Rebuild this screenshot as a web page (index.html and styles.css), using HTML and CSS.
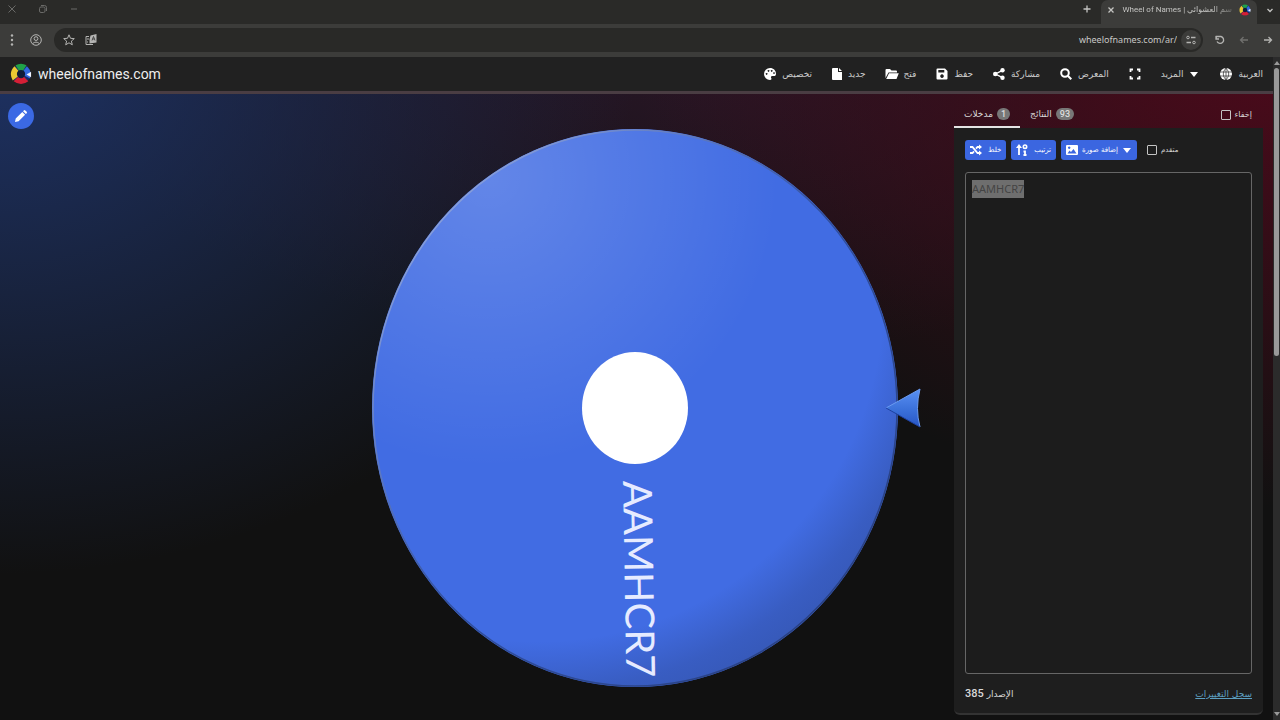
FILE: index.html
```html
<!DOCTYPE html>
<html lang="ar">
<head>
<meta charset="utf-8">
<title>Wheel of Names</title>
<link rel="stylesheet" href="styles.css">
</head>
<body>
<div class="browser">
  <div class="tabstrip">
    <div class="window-controls">
      <button aria-label="إغلاق"><svg width="10" height="10" viewBox="0 0 10 10"><path d="M1.5 1.5l7 7M8.5 1.5l-7 7"/></svg></button>
      <button aria-label="استعادة"><svg width="10" height="10" viewBox="0 0 10 10"><rect x="1.500" y="3" width="5.500" height="5.500" rx="1.500"/><path d="M3 1.500h3.500q2 0 2 2V7"/></svg></button>
      <button aria-label="تصغير"><svg width="10" height="10" viewBox="0 0 10 10"><path d="M2 5h6"/></svg></button>
    </div>
    <div class="tabs">
      <button class="new-tab" aria-label="علامة جديدة"><svg width="10" height="10" viewBox="0 0 10 10"><path stroke-width="1.300" d="M5 1.500v7M1.500 5h7"/></svg></button>
      <div class="tab">
        <button aria-label="إغلاق العلامة"><svg width="8" height="8" viewBox="0 0 8 8"><path stroke-width="1.300" d="M1.500 1.500l5 5M6.500 1.500l-5 5"/></svg></button>
        <span class="tab-title" dir="rtl">سم العشوائي | Wheel of Names</span>
        <svg class="logo" width="12" height="12" viewBox="0 0 24 24"><use href="#wheel-logo"/></svg>
      </div>
      <button class="tab-menu" aria-label="بحث العلامات"><svg width="8" height="8" viewBox="0 0 8 8"><path stroke-width="1.300" d="M1.500 3l2.500 2.500L6.500 3"/></svg></button>
    </div>
  </div>
  <div class="toolbar">
    <button aria-label="القائمة"><svg width="14" height="14" viewBox="0 0 14 14"><g class="solid"><circle cx="7" cy="2.500" r="1.200"/><circle cx="7" cy="7" r="1.200"/><circle cx="7" cy="11.500" r="1.200"/></g></svg></button>
    <button aria-label="الحساب"><svg width="14" height="14" viewBox="0 0 14 14"><circle cx="7" cy="7" r="5.300"/><circle cx="7" cy="5.600" r="1.900"/><path d="M3.500 10.700q3.500-3.200 7 0"/></svg></button>
    <div class="address">
      <button aria-label="إشارة"><svg width="14" height="14" viewBox="0 0 14 14"><path d="M7 1.800l1.500 3.500 3.800.3-2.900 2.500.9 3.700L7 9.800l-3.300 2 .9-3.700-2.900-2.500 3.800-.3z"/></svg></button>
      <button aria-label="ترجمة"><svg width="14" height="14" viewBox="0 0 14 14"><path d="M5 3.500H2v8h7M3 6h2M3 9h1"/><path class="solid" d="M6.500 2.500l6-1.500v8.500l-7 1v-4z"/><path class="cut" d="M8 7.500l1.500-4L11 7.500M8.500 6h2"/></svg></button>
      <input class="url" type="text" aria-label="العنوان" value="wheelofnames.com/ar/">
      <button class="site-info" aria-label="معلومات الموقع"><svg width="12" height="12" viewBox="0 0 12 12"><circle cx="3" cy="3.500" r="1.300"/><circle cx="9" cy="8.500" r="1.300"/><path stroke-width="1.300" d="M6 3.500h4.500M1.500 8.500H6"/></svg></button>
    </div>
    <button aria-label="إعادة تحميل"><svg width="12" height="12" viewBox="0 0 12 12"><path stroke-width="1.300" d="M2 2v3h3M2.300 4.700V2.500H7a3.500 3.500 0 1 1-4 5"/></svg></button>
    <button class="dim" aria-label="رجوع"><svg width="12" height="12" viewBox="0 0 12 12"><path stroke-width="1.300" d="M10 6H2.500M5.500 3l-3 3 3 3"/></svg></button>
    <button aria-label="تقدم"><svg width="12" height="12" viewBox="0 0 12 12"><path stroke-width="1.300" d="M2 6h7.500M6.500 3l3 3-3 3"/></svg></button>
  </div>
</div>

<div class="page">
  <div class="content">
    <header class="site-header">
      <a class="brand" href="#">
        <svg width="24" height="22" viewBox="0 0 24 24">
          <g id="wheel-logo">
            <circle cx="12" cy="12" r="10.500" fill="#162a68"/>
            <path d="M12 12L6 2.500Q12-1 18 2.500z" fill="#20a348"/>
            <path d="M12 12L3 19Q-2 10 5 3.500z" fill="#ecc832"/>
            <path d="M12 12L20 20Q12 26 4 20z" fill="#d51f35"/>
            <path d="M12 12L18.500 3.500Q22 7 22.500 11L22 17z" fill="#3369df"/>
            <circle cx="12" cy="12" r="4.500" fill="#101c38"/>
            <path d="M18 12.500L23 9.500v6z" fill="#eef2ff"/>
          </g>
        </svg>
        <span>wheelofnames.com</span>
      </a>
      <nav class="menu">
        <button><svg width="14" height="14" viewBox="0 0 14 14"><path class="solid" fill-rule="evenodd" d="M7 1a6 6 0 0 0 0 12c1.600 0 1.800-1.200 1.200-2-.7-1.100 0-2 1.100-2H11c1.300 0 2-.9 2-2.300C12.800 3.300 10.500 1 7 1zM3.600 6a.9.900 0 1 0 .01 0M5.500 3a.9.900 0 1 0 .01 0M8.700 3a.9.900 0 1 0 .01 0M11 5.300a.8.800 0 1 0 .01 0"/></svg><span>تخصيص</span></button>
        <button><svg width="12" height="14" viewBox="0 0 12 14"><path class="solid" d="M2 1h5v4h4v8H2q-1 0-1-1V2q0-1 1-1zM8 1l3 3H8z"/></svg><span>جديد</span></button>
        <button><svg width="14" height="14" viewBox="0 0 14 14"><path class="solid" d="M.5 11V3q0-1 1-1H5l1.500 1.500H11q1 0 1 1V5.500H3.500zM4 6.300h9.800L11.500 12H1.200z"/></svg><span>فتح</span></button>
        <button><svg width="14" height="14" viewBox="0 0 14 14"><path class="solid" fill-rule="evenodd" d="M2.500 1.500H10L12.500 4v7.500q0 1-1 1h-9q-1 0-1-1v-9q0-1 1-1zM3.300 3v2.500h6V3zM7 7.300a1.800 1.800 0 1 0 .01 0"/></svg><span>حفظ</span></button>
        <button><svg width="14" height="14" viewBox="0 0 14 14"><path stroke-width="1.400" d="M11 3.200L3.500 7 11 10.800"/><g class="solid"><circle cx="3.300" cy="7" r="2.300"/><circle cx="10.500" cy="3.200" r="2.200"/><circle cx="10.500" cy="10.800" r="2.200"/></g></svg><span>مشاركة</span></button>
        <button><svg width="14" height="14" viewBox="0 0 14 14"><g stroke-width="2"><circle cx="6" cy="6" r="3.800"/><path d="M8.800 8.800l3.500 3.500"/></g></svg><span>المعرض</span></button>
        <button aria-label="ملء الشاشة"><svg width="14" height="14" viewBox="0 0 14 14"><path stroke-width="1.800" d="M2.500 5V2.500H5M9 2.500h2.500V5M11.500 9v2.500H9M5 11.500H2.500V9"/></svg></button>
        <button><span>المزيد</span><svg width="12" height="14" viewBox="0 0 12 14"><path class="solid" d="M2 5h8L6 10z"/></svg></button>
        <button><svg width="14" height="14" viewBox="0 0 14 14"><circle class="solid" cx="7" cy="7" r="6"/><path class="cut" d="M1 5h12M1 9h12M7 1v12M7 1Q1.500 7 7 13M7 1q5.500 6 0 12"/></svg><span>العربية</span></button>
      </nav>
    </header>

    <main class="stage">
      <div class="side">
        <button class="edit" aria-label="تعديل"><svg width="14" height="14" viewBox="0 0 14 14"><path class="solid" d="M1 13l.7-3.500L8.300 3l2.800 2.800-6.500 6.500zM9 2.200l.8-.8q.8-.7 1.500 0l1.400 1.400q.6.700 0 1.400l-.8.800z"/></svg></button>
      </div>
      <svg class="wheel" viewBox="0 0 572 562" role="img" aria-label="AAMHCR7">
        <defs>
          <radialGradient id="shine" gradientUnits="userSpaceOnUse" cx="140" cy="50" r="290"><stop offset="0" stop-color="#fff" stop-opacity=".18"/><stop offset=".5" stop-color="#fff" stop-opacity=".09"/><stop offset="1" stop-color="#fff" stop-opacity="0"/></radialGradient>
          <radialGradient id="shade" gradientUnits="userSpaceOnUse" cx="190" cy="170" r="420"><stop offset=".82" stop-color="#2c4690" stop-opacity="0"/><stop offset=".94" stop-color="#2c4690" stop-opacity=".4"/><stop offset="1" stop-color="#2c4690" stop-opacity=".5"/></radialGradient>
          <linearGradient id="rim" x1="0" y1="0" x2="1" y2="1"><stop offset="0" stop-color="#a9bdf0"/><stop offset=".5" stop-color="#31509f"/><stop offset="1" stop-color="#263b78"/></linearGradient>
          <linearGradient id="arrow" x1="0" y1="0" x2="0" y2="1"><stop offset="0" stop-color="#5a91f4"/><stop offset=".5" stop-color="#3d73dc"/><stop offset="1" stop-color="#2856c4"/></linearGradient>
        </defs>
        <ellipse cx="286" cy="281" rx="263" ry="279" fill="#416ce3"/>
        <ellipse cx="286" cy="281" rx="263" ry="279" fill="url(#shine)"/>
        <ellipse cx="286" cy="281" rx="263" ry="279" fill="url(#shade)"/>
        <ellipse cx="286" cy="281" rx="262" ry="278" fill="none" stroke="url(#rim)" stroke-width="1.500"/>
        <ellipse cx="286" cy="281" rx="53" ry="56" fill="#fff"/>
        <text class="wheel-name" transform="translate(274 354) rotate(89)">AAMHCR7</text>
        <path d="M537 281L571 262Q566 282 571 300z" fill="url(#arrow)"/>
        <path d="M537 281L571 262Q566 282 571 300" fill="none" stroke="#6a9af0"/>
        <path d="M537 281L571 300" stroke="#1d41a0"/>
      </svg>
      <aside class="side side-panel">
        <div class="panel-tabs">
          <button class="panel-tab active"><span dir="rtl">مدخلات</span><span class="badge">1</span></button>
          <button class="panel-tab"><span>النتائج</span><span class="badge">93</span></button>
          <label class="check hide"><input type="checkbox"><span>إخفاء</span></label>
        </div>
        <div class="panel">
          <div class="actions">
            <button class="action"><svg width="12" height="12" viewBox="0 0 12 12"><path stroke-width="1.800" d="M0 3h2.500l5 6H10M0 9h2.500L4 7.300M6 4.700L7.500 3H10"/><path class="solid" d="M9 .5L12 3 9 5.500zM9 6.500L12 9l-3 2.500z"/></svg><span>خلط</span></button>
            <button class="action"><svg width="12" height="12" viewBox="0 0 12 12"><path stroke-width="1.800" d="M3 11V3M9 6.500V11M7.500 7.500H9M7.500 11h3"/><path class="solid" d="M3 0l3 4H0z"/><circle stroke-width="1.600" cx="9" cy="2.700" r="1.700"/></svg><span>ترتيب</span></button>
            <button class="action image"><svg width="12" height="12" viewBox="0 0 12 12"><path class="solid" fill-rule="evenodd" d="M1 1h10q1 0 1 1v8q0 1-1 1H1q-1 0-1-1V2q0-1 1-1zM1.500 9.500h9L7.500 5 5 8 3.500 6.500zM3.200 2.500a1.200 1.200 0 1 0 .01 0"/></svg><span>إضافة صورة</span><svg width="10" height="12" viewBox="0 0 10 12"><path class="solid" d="M1 4h8L5 9z"/></svg></button>
            <label class="check"><input type="checkbox"><span>متقدم</span></label>
          </div>
          <textarea class="entries" aria-label="مدخلات" spellcheck="false">AAMHCR7</textarea>
          <div class="panel-foot">
            <span class="version" dir="rtl">الإصدار <b>385</b></span>
            <a href="#" dir="rtl">سجل التغييرات</a>
          </div>
        </div>
      </aside>
    </main>
  </div>
  <div class="scrollbar"><div class="arrow-up"></div><div class="thumb"></div><div class="arrow-down"></div></div>
</div>
<script src="app.js"></script>
</body>
</html>
```

FILE: styles.css
```css
* { box-sizing: border-box; }
body {
  margin: 0;
  height: 100vh;
  display: flex;
  flex-direction: column;
  overflow: hidden;
  background: #111;
  color: #d8d8d8;
  font: 10px/16px Roboto, "DejaVu Sans", sans-serif;
}
button {
  display: flex;
  align-items: center;
  justify-content: center;
  margin: 0;
  padding: 0;
  border: 0;
  background: none;
  color: inherit;
  font: inherit;
}
svg { flex: none; fill: none; stroke: currentColor; }
.solid { fill: currentColor; stroke: none; }
.cut { stroke: #262626; stroke-width: 0.7; }
#wheel-logo { stroke: none; }

.tabstrip { display: flex; justify-content: space-between; height: 24px; background: #2a2a28; }
.window-controls { display: flex; gap: 21px; height: 18px; padding-left: 7px; color: #6a6a68; }
.tabs { display: flex; color: #c4c4c2; }
.new-tab { width: 28px; height: 18px; }
.tab {
  display: flex;
  align-items: center;
  gap: 7px;
  height: 24px;
  padding: 0 6px 5px;
  border-radius: 7px 7px 0 0;
  background: #3c3c3a;
}
.tab-title {
  min-width: 109px;
  text-align: left;
  white-space: nowrap;
  font: 8px/16px Roboto, "DejaVu Sans", sans-serif;
  mask-image: linear-gradient(to left, rgb(0 0 0 / 0.3), #000 20px);
}
.tab-menu { width: 20px; height: 20px; margin-left: 3px; border-radius: 6px; background: #2a2a28; }
.toolbar {
  display: flex;
  align-items: center;
  gap: 10px;
  height: 33px;
  padding: 0 5px 2px;
  background: #3c3c3a;
  color: #b4b4b2;
}
.toolbar > button { width: 14px; }
.address {
  display: flex;
  flex: 1;
  align-items: center;
  gap: 8px;
  height: 24px;
  margin-left: 1px;
  padding: 0 2px 0 8px;
  border-radius: 12px;
  background: #292927;
}
.url {
  flex: 1;
  min-width: 0;
  padding: 0;
  border: 0;
  outline: 0;
  background: none;
  color: #c8c8c6;
  text-align: right;
  font: 9px/16px "Noto Sans", sans-serif;
}
.site-info { width: 20px; height: 20px; margin-left: -4px; border-radius: 10px; background: #3c3c3a; }
.dim { color: #71716f; }

.page { display: flex; flex: 1; min-height: 0; }
.content {
  display: flex;
  flex: 1;
  flex-direction: column;
  min-width: 0;
  background:
    radial-gradient(ellipse 50% 68% at 100% 0, #4c0a1b, transparent),
    radial-gradient(ellipse 50% 78% at 0 0, #1e3264, transparent),
    radial-gradient(ellipse 50% 45% at 55% 0, #281626, transparent),
    #111;
}
.site-header {
  display: flex;
  align-items: center;
  justify-content: space-between;
  height: 37px;
  padding: 0 10px 0 9px;
  border-bottom: 3px solid #4a3d43;
  background: #212121;
}
.brand { display: flex; align-items: center; gap: 5px; color: #eee; font-size: 14px; text-decoration: none; }
.menu { display: flex; align-items: center; gap: 19px; color: #fff; }
.menu button { gap: 5px; }
.menu span { color: #ccc; font: 9px/16px "DejaVu Sans", sans-serif; }

.stage { display: grid; flex: 1; grid-template-columns: minmax(0, 1fr) minmax(0, 572px) minmax(0, 1fr); min-height: 0; padding-right: 3px; }
.wheel { align-self: start; width: 100%; margin-top: 33px; overflow: visible; stroke: none; }
.wheel-name { fill: #e6ebff; font: 400 40px Lato, sans-serif; }
.edit { width: 26px; height: 26px; margin: 9px 0 0 8px; border-radius: 50%; background: #3b69e4; color: #fff; }
.side-panel { display: flex; flex-direction: column; width: 309px; margin-right: 7px; padding: 8px 0 5px; justify-self: end; }
.panel-tabs { display: flex; height: 26px; font: 9px/16px "DejaVu Sans", sans-serif; }
.panel-tab { gap: 4px; padding: 0 10px; border-bottom: 2px solid transparent; }
.panel-tab.active { border-color: #e4e4e4; }
.badge { min-width: 13px; padding: 0 4px; border-radius: 6px; background: #777; color: #ddd; font: 500 9px/12px Roboto, sans-serif; }
.check { display: flex; align-items: center; gap: 4px; font: 7px/16px "DejaVu Sans", sans-serif; }
.check input { appearance: none; width: 10px; height: 10px; margin: 0; border: 1px solid #c4c4c4; border-radius: 1px; }
.hide { margin: 0 11px 0 auto; font-size: 8px; }
.panel { display: flex; flex: 1; flex-direction: column; padding: 12px 11px 11px; border-bottom: 2px solid #333; border-radius: 0 0 6px 6px; background: #1e1e1e; }
.actions { display: flex; gap: 5px; }
.action { gap: 6px; height: 20px; padding: 0 5px; border-radius: 3px; background: #3b66e0; color: #fff; font: 7px/16px "DejaVu Sans", sans-serif; }
.action.image { gap: 4px; }
.actions .check { margin-left: 5px; }
.entries {
  flex: 1;
  margin: 12px 0;
  padding: 7px 6px;
  border: 1px solid #666;
  border-radius: 3px;
  outline: 0;
  resize: none;
  background: #1c1c1c;
  color: #ddd;
  font: 11px/18px "Noto Sans", sans-serif;
}
.entries::selection { background: #6e6e6e; color: #444; }
.panel-foot { display: flex; justify-content: space-between; font: 9px/16px "DejaVu Sans", sans-serif; }
.version b { font: 500 11px/16px Roboto, sans-serif; }
.panel-foot a { color: #5c9fc0; }
.scrollbar { display: flex; flex-direction: column; align-items: center; width: 7px; padding: 4px 0; background: #2b2b2b; }
.arrow-up, .arrow-down { border: 3px solid transparent; }
.arrow-up { border-top: 0; border-bottom: 4px solid #999; }
.arrow-down { border-bottom: 0; border-top: 4px solid #999; }
.thumb { width: 5px; height: 44%; margin: 3px 0 auto; border-radius: 3px; background: #999; }
```

FILE: app.js
```js
const entries = document.querySelector('.entries');
entries.focus();
entries.select();
```
